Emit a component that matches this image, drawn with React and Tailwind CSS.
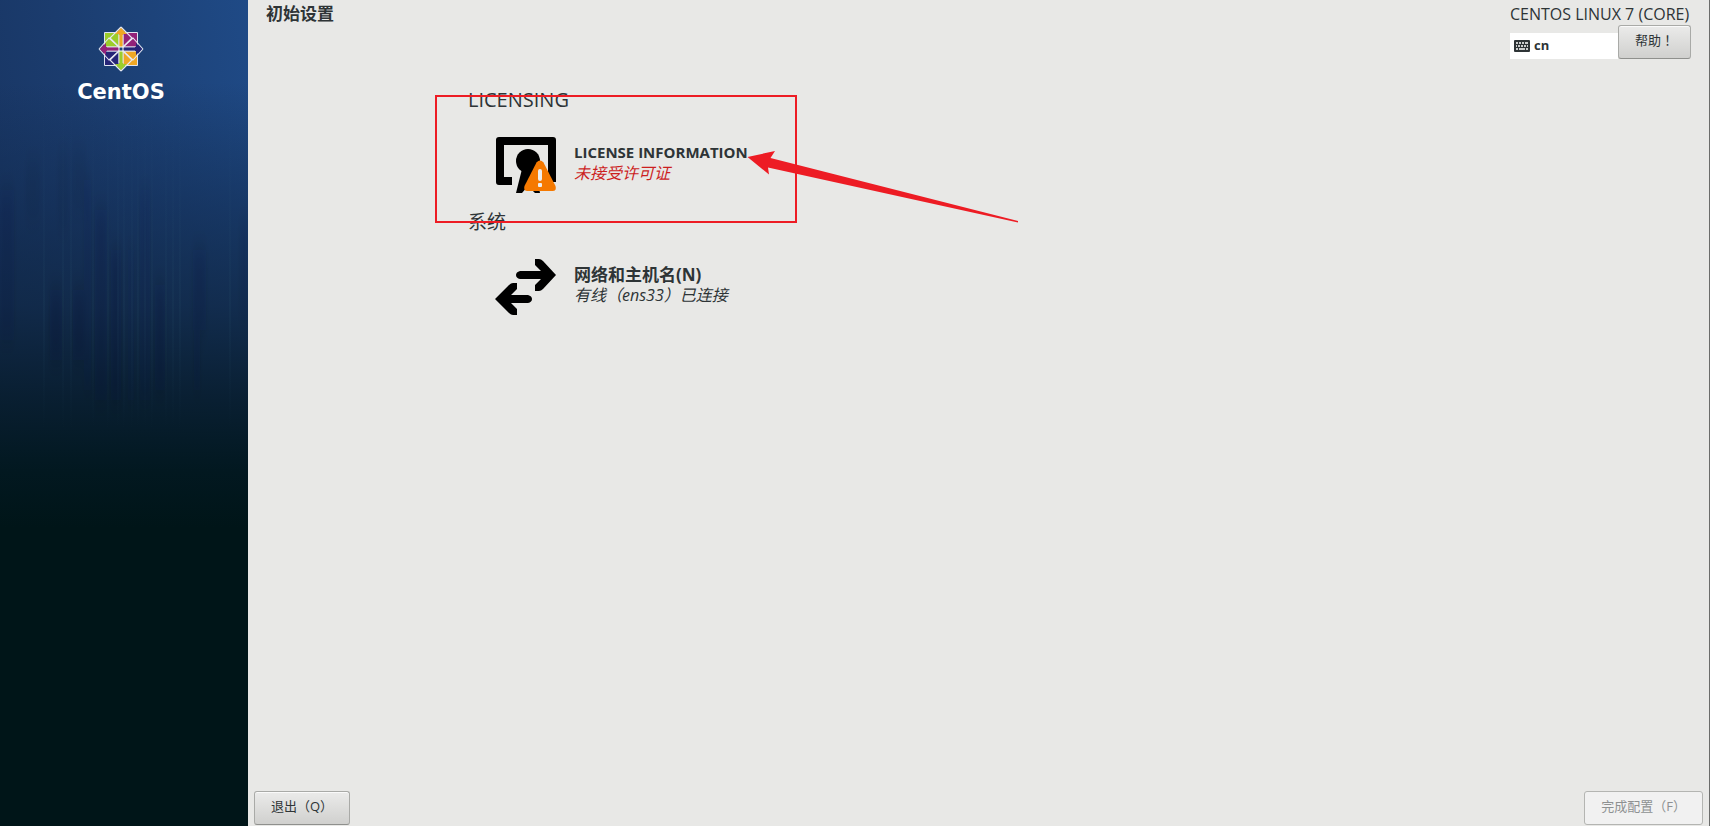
import clsx from 'clsx'

const SPOKES = [
  {
    title: 'LICENSING',
    titleSize: 'text-[20px]',
    name: 'LICENSE INFORMATION',
    nameSize: 'text-[15px]',
    status: '未接受许可证',
    warning: true,
    icon: <LicenseIcon />,
  },
  {
    title: '系统',
    titleSize: 'text-[19px]',
    name: '网络和主机名(N)',
    nameSize: 'text-[17px]',
    status: '有线（ens33）已连接',
    warning: false,
    icon: <NetworkIcon />,
  },
]

// x, y, width, height, opacity of the faint vertical bars in the sidebar
const STREAKS = [
  [0, 190, 14, 150, 0.1],
  [26, 160, 14, 60, 0.05],
  [50, 290, 12, 70, 0.16],
  [58, 150, 10, 80, 0.05],
  [72, 150, 14, 60, 0.05],
  [73, 290, 11, 70, 0.16],
  [84, 180, 7, 210, 0.08],
  [95, 210, 12, 190, 0.12],
  [111, 250, 10, 150, 0.16],
  [128, 250, 6, 150, 0.08],
  [140, 190, 10, 210, 0.08],
  [155, 285, 10, 105, 0.14],
  [193, 250, 13, 80, 0.12],
  [194, 330, 6, 60, 0.1],
  [240, 220, 8, 100, 0.08],
]

const GLOWS = [43, 62, 70, 92, 107, 117, 123, 131, 137, 144, 151, 165, 172, 179, 229]

function Streaks() {
  return (
    <svg className="absolute inset-0 w-full h-full" viewBox="0 0 248 826" preserveAspectRatio="none" aria-hidden="true">
      <defs>
        <filter id="soft" x="-10%" y="-10%" width="120%" height="120%">
          <feGaussianBlur stdDeviation="2 12" />
        </filter>
        <linearGradient id="beam" x1="0" y1="0" x2="0" y2="1">
          <stop offset="0" stopColor="#2d5a80" stopOpacity="0" />
          <stop offset="0.6" stopColor="#2d5a70" stopOpacity="0.12" />
          <stop offset="1" stopColor="#2d5a70" stopOpacity="0" />
        </linearGradient>
      </defs>
      <g filter="url(#soft)" fill="#001830">
        {STREAKS.map(([x, y, w, h, o], i) => (
          <rect key={i} x={x} y={y} width={w} height={h} opacity={o} />
        ))}
      </g>
      {GLOWS.map(x => <rect key={x} x={x} y="110" width="2" height="320" fill="url(#beam)" />)}
    </svg>
  )
}

function CentosMark() {
  return (
    <svg className="w-[46px] h-[46px]" viewBox="-23 -23 46 46" aria-hidden="true">
      <g stroke="#dfe4f0" strokeWidth="1">
        <path d="M-16.5-16.5H-2V-2H-16.5Z" fill="#9ccd2a" />
        <path d="M2-16.5H16.5V-2H2Z" fill="#932279" />
        <path d="M-16.5 2H-2V16.5H-16.5Z" fill="#262577" />
        <path d="M2 2H16.5V16.5H2Z" fill="#efa724" />
      </g>
      <path d="M0-21.500 6-15H2V-2H-2V-15H-6Z" fill="#efa724" />
      <path d="M21.500 0 15 6V2H2V-2H15V-6Z" fill="#262577" />
      <path d="M0 21.500-6 15H-2V2H2V15H6Z" fill="#9ccd2a" />
      <path d="M-21.500 0-15-6V-2H-2V2H-15V6Z" fill="#932279" />
      <g fill="none" stroke="#e6e8f2" strokeWidth="1.1">
        <path d="M0-22 11-11 2-2M0-22-11-11-2-2" />
        <path d="M22 0 12 11 2 2M22 0 12-11 2-2" />
        <path d="M0 22-11 11-2 2M0 22 11 11 2 2" />
        <path d="M-22 0-12-11-2-2M-22 0-12 11-2 2" />
        <path d="M-2-14V-2H-14M2-14V-2H14M-2 14V2H-14M2 14V2H14" strokeWidth="0.8" />
      </g>
      <path d="M-2-2H2V2H-2Z" fill="#1c4377" stroke="#fff" strokeWidth="1" />
    </svg>
  )
}

function LicenseIcon() {
  return (
    <svg className="w-[62px] h-[58px]" viewBox="0 0 62 58" aria-hidden="true">
      <path d="M4 1H58Q61 1 61 4V46H53V9H9V41H17V49H4Q1 49 1 46V4Q1 1 4 1Z" />
      <circle cx="33" cy="25" r="12" />
      <path d="M27 33 21 57H27L33 50L40 57H45L40 33Z" />
      <path d="M41.500 26.500Q45 22.500 48.500 26.500L60.500 50Q62 55 57.500 55H32.500Q28 55 29.500 50Z" fill="#f57900" />
      <rect x="43" y="33" width="4" height="12" rx="2" fill="#eee" />
      <rect x="43" y="47" width="4" height="4" rx="1" fill="#eee" />
    </svg>
  )
}

function NetworkIcon() {
  return (
    <svg className="w-[62px] h-[58px]" viewBox="0 0 62 58" aria-hidden="true">
      <path d="M25 13H46L40 7V1H44Q46 1 48 3L61 17 48 31Q46 33 44 33H40V27L46 21H25Q21 20 21 17T25 13Z" />
      <path d="M33 37H16L22 31V25H18Q16 25 14 27L0 41 14 55Q16 57 18 57H22V51L16 45H33Q37 44 37 41T33 37Z" />
    </svg>
  )
}

function KeyboardIcon() {
  return (
    <svg className="w-4 h-3" viewBox="0 0 16 12" aria-hidden="true">
      <rect width="16" height="12" rx="1" fill="#2e3436" />
      <path
        d="M2 3H4M5 3H7M8 3H10M11 3H14M2 6H3M4 6H6M7 6H9M10 6H12M13 6H14M2 9H4M5 9H11M12 9H14"
        stroke="#fff"
        strokeWidth="1.500"
      />
    </svg>
  )
}

function GtkButton({ className, ...props }) {
  return (
    <button
      type="button"
      className={clsx(
        'h-[34px] rounded-[3px] border border-[#a9aaa7] border-b-[#8f908d] px-4 pb-1 text-[13px] leading-5 whitespace-nowrap',
        'bg-linear-to-b from-[#ebebea] to-[#d0d0ce] shadow-[inset_0_1px_0_#fafafa]',
        'disabled:from-[#f1f1f1] disabled:to-[#f1f1f1] disabled:border-[#b4b5b2] disabled:text-[#8e9192] disabled:shadow-none',
        className,
      )}
      {...props}
    />
  )
}

function Spoke({ spoke }) {
  return (
    <section>
      <h2 className={clsx('leading-6', spoke.titleSize)}>{spoke.title}</h2>
      <button type="button" className="mt-[23px] ml-[27px] flex h-[60px] items-center gap-[17px] text-left">
        {spoke.icon}
        <span className="flex flex-col pb-[5px]">
          <span className={clsx('leading-[21px] font-bold', spoke.nameSize)}>{spoke.name}</span>
          <span className={clsx('text-base leading-[21px] italic', spoke.warning && 'text-[#cc1f1f]')}>
            {spoke.status}
          </span>
        </span>
      </button>
    </section>
  )
}

// Red box and arrow that point at the licence entry
function Callout() {
  return (
    <svg
      className="pointer-events-none absolute top-[95px] left-[187px] w-[584px] h-[130px]"
      viewBox="435 95 584 130"
      aria-hidden="true"
    >
      <rect x="436" y="96" width="360" height="126" fill="none" stroke="#ed1c24" strokeWidth="2" />
      <path d="M747.500 157 775 151 770.500 158 1018 221V222.500L768 167.500 769 174.500Z" fill="#ed1c24" />
    </svg>
  )
}

export default function App() {
  return (
    <div className="flex min-h-screen bg-[#e8e8e6] text-[#2e3436] font-['Open_Sans','Noto_Sans_CJK_SC',sans-serif]">
      <aside className="relative w-[248px] shrink-0 bg-[linear-gradient(to_bottom,transparent_10%,#10284a80_25%,#0f2642c8_37%,#081d2eee_48%,#021820_57%,#001518_64%),linear-gradient(80deg,#16305a,#1b3c6e_50%,#1f4a86)]">
        <Streaks />
        <div className="relative flex flex-col items-center pt-[26px] pr-[6px]">
          <CentosMark />
          <div className="mt-1 text-[21px] leading-8 font-bold text-white font-['DejaVu_Sans',sans-serif]">CentOS</div>
        </div>
      </aside>

      <div className="relative flex min-w-0 flex-1 flex-col border-r border-[#6b6c6b]">
        <header className="flex items-start justify-between pt-1 pr-[18px] pl-[18px]">
          <h1 className="text-[17px] leading-5 font-bold">初始设置</h1>
          <div className="flex flex-col">
            <div className="text-base leading-[21px]">CENTOS LINUX 7 (CORE)</div>
            <div className="flex items-end">
              <button type="button" className="flex h-[26px] w-[108px] items-center gap-1 bg-white px-1 text-[13px] font-bold">
                <KeyboardIcon />
                cn
              </button>
              <GtkButton className="font-['Noto_Sans_CJK_TC',sans-serif]">帮助！</GtkButton>
            </div>
          </div>
        </header>

        <main className="flex flex-1 flex-col gap-[15px] pt-[29px] pl-[220px]">
          {SPOKES.map(s => <Spoke key={s.name} spoke={s} />)}
        </main>

        <footer className="flex justify-between pr-[6px] pb-px pl-[6px]">
          <GtkButton>退出（Q）</GtkButton>
          <GtkButton disabled>完成配置（F）</GtkButton>
        </footer>

        <Callout />
      </div>
    </div>
  )
}
